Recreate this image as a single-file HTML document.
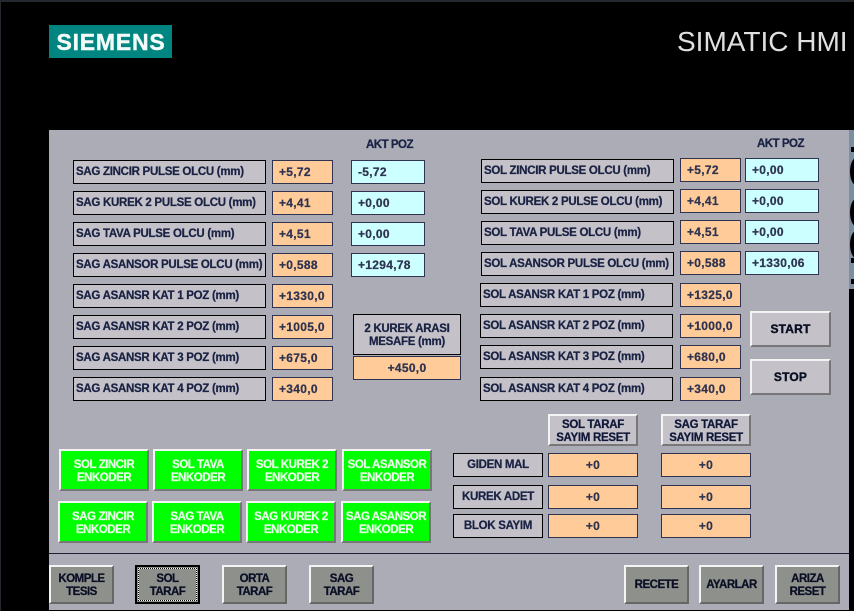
<!DOCTYPE html>
<html><head><meta charset="utf-8"><style>
html,body{margin:0;padding:0;background:#000;width:854px;height:611px;overflow:hidden}
#r{position:relative;width:854px;height:611px;background:#000;overflow:hidden;font:bold 11.5px "Liberation Sans",sans-serif;-webkit-text-stroke:.25px}
#r div{position:absolute;box-sizing:border-box;white-space:nowrap}
.l,.o,.c,.b,.g,.k,.t{display:flex;align-items:center}
.l{background:#c4c2c8;border:1px solid #000;color:#1a2244;height:24px;width:193px;padding-left:2px;letter-spacing:-.28px}
.o{background:#ffcc99;border:1px solid #2f3350;color:#2e3350;height:24px;width:61px;padding-left:6px;letter-spacing:.3px;font-size:12px}
.c{background:#ccffff;border:1px solid #2f3350;color:#2e3350;height:24px;width:74px;padding-left:6px;letter-spacing:.3px;font-size:12px}
.m{justify-content:center;padding-left:0}
.x{text-align:center;justify-content:center;padding:0;line-height:13px;letter-spacing:-.3px}
.b{justify-content:center;text-align:center;line-height:13px;border:2px solid;border-color:#f4f4f4 #777 #777 #f4f4f4;background:#c4c2c8;color:#10183a;letter-spacing:-.3px;padding-top:3px}
.s{font-size:12px;letter-spacing:.2px;color:#0a0f24;-webkit-text-stroke:.4px;padding-top:1px}
.g{justify-content:center;text-align:center;line-height:13px;border:2px solid;border-color:#f4f4f4 #777 #777 #f4f4f4;background:#00ff00;color:#e8ffe8;width:90px;height:42px;letter-spacing:-.45px;padding-top:3px}
.k{justify-content:center;text-align:center;line-height:13px;border:2px solid;border-color:#f4f4f4 #666 #666 #f4f4f4;background:#8e908c;color:#0a0f24;width:65px;height:39px;letter-spacing:-.5px;padding-top:2px}
.t{color:#1a2244;letter-spacing:-.5px}
</style></head><body><div id="r">
<div style="left:0;top:0;width:854px;height:2px;background:#25282e"></div>
<div style="left:0;top:0;width:1px;height:611px;background:#25282e"></div>
<div style="left:49px;top:25px;width:123px;height:33px;padding-left:1px;background:#008580;color:#f2fbfa;font-size:23px;line-height:35px;text-align:center;letter-spacing:.8px;-webkit-text-stroke:.4px">SIEMENS</div>
<div style="left:677px;top:24px;color:#e0e0e0;font:28px/36px 'Liberation Sans',sans-serif;-webkit-text-stroke:0">SIMATIC HMI</div>

<div style="left:849px;top:130px;width:5px;height:159px;background:#7b8fa1"></div>
<div style="left:851px;top:147px;width:3px;height:5px;background:#000"></div>
<div style="left:850px;top:158px;width:12px;height:27px;background:#000;border-radius:50%"></div>
<div style="left:850px;top:199px;width:12px;height:27px;background:#000;border-radius:50%"></div>
<div style="left:850px;top:231px;width:12px;height:27px;background:#000;border-radius:50%"></div>
<div style="left:851px;top:258px;width:3px;height:5px;background:#000"></div>
<div style="left:851px;top:279px;width:3px;height:5px;background:#000"></div>

<div style="left:49px;top:130px;width:800px;height:480px;background:#abacb6"></div>
<div style="left:49px;top:553px;width:800px;height:1px;background:#1c2030"></div>

<div class="t" style="left:366px;top:139px">AKT POZ</div>
<div class="t" style="left:757px;top:138px">AKT POZ</div>

<div class="l" style="left:73px;top:160px">SAG ZINCIR PULSE OLCU (mm)</div>
<div class="l" style="left:73px;top:191px">SAG KUREK 2 PULSE OLCU (mm)</div>
<div class="l" style="left:73px;top:222px">SAG TAVA PULSE OLCU (mm)</div>
<div class="l" style="left:73px;top:253px">SAG ASANSOR PULSE OLCU (mm)</div>
<div class="l" style="left:73px;top:284px">SAG ASANSR KAT 1 POZ (mm)</div>
<div class="l" style="left:73px;top:315px">SAG ASANSR KAT 2 POZ (mm)</div>
<div class="l" style="left:73px;top:346px">SAG ASANSR KAT 3 POZ (mm)</div>
<div class="l" style="left:73px;top:377px">SAG ASANSR KAT 4 POZ (mm)</div>

<div class="o" style="left:272px;top:160px">+5,72</div>
<div class="o" style="left:272px;top:191px">+4,41</div>
<div class="o" style="left:272px;top:222px">+4,51</div>
<div class="o" style="left:272px;top:253px">+0,588</div>
<div class="o" style="left:272px;top:284px">+1330,0</div>
<div class="o" style="left:272px;top:315px">+1005,0</div>
<div class="o" style="left:272px;top:346px">+675,0</div>
<div class="o" style="left:272px;top:377px">+340,0</div>

<div class="c" style="left:351px;top:160px">-5,72</div>
<div class="c" style="left:351px;top:191px">+0,00</div>
<div class="c" style="left:351px;top:222px">+0,00</div>
<div class="c" style="left:351px;top:253px">+1294,78</div>

<div class="l x" style="left:353px;top:314px;width:108px;height:41px;padding-top:2px">2 KUREK ARASI<br>MESAFE (mm)</div>
<div class="o m" style="left:353px;top:356px;width:108px">+450,0</div>

<div class="l" style="left:481px;top:159px">SOL ZINCIR PULSE OLCU (mm)</div>
<div class="l" style="left:481px;top:190px">SOL KUREK 2 PULSE OLCU (mm)</div>
<div class="l" style="left:481px;top:221px">SOL TAVA PULSE OLCU (mm)</div>
<div class="l" style="left:481px;top:252px">SOL ASANSOR PULSE OLCU (mm)</div>
<div class="l" style="left:480px;top:283px">SOL ASANSR KAT 1 POZ (mm)</div>
<div class="l" style="left:480px;top:314px">SOL ASANSR KAT 2 POZ (mm)</div>
<div class="l" style="left:480px;top:345px">SOL ASANSR KAT 3 POZ (mm)</div>
<div class="l" style="left:480px;top:377px">SOL ASANSR KAT 4 POZ (mm)</div>

<div class="o" style="left:680px;top:158px">+5,72</div>
<div class="o" style="left:680px;top:189px">+4,41</div>
<div class="o" style="left:680px;top:220px">+4,51</div>
<div class="o" style="left:680px;top:251px">+0,588</div>
<div class="o" style="left:680px;top:283px">+1325,0</div>
<div class="o" style="left:680px;top:314px">+1000,0</div>
<div class="o" style="left:680px;top:345px">+680,0</div>
<div class="o" style="left:680px;top:377px">+340,0</div>

<div class="c" style="left:745px;top:158px">+0,00</div>
<div class="c" style="left:745px;top:189px">+0,00</div>
<div class="c" style="left:745px;top:220px">+0,00</div>
<div class="c" style="left:745px;top:251px">+1330,06</div>

<div class="b s" style="left:750px;top:311px;width:81px;height:36px">START</div>
<div class="b s" style="left:750px;top:359px;width:81px;height:36px">STOP</div>

<div class="b" style="left:548px;top:414px;width:90px;height:32px">SOL TARAF<br>SAYIM RESET</div>
<div class="b" style="left:661px;top:414px;width:90px;height:32px">SAG TARAF<br>SAYIM RESET</div>

<div class="l x" style="left:453px;top:453px;width:90px">GIDEN MAL</div>
<div class="l x" style="left:453px;top:485px;width:90px">KUREK ADET</div>
<div class="l x" style="left:453px;top:514px;width:90px">BLOK SAYIM</div>
<div class="o m" style="left:548px;top:453px;width:90px">+0</div>
<div class="o m" style="left:548px;top:485px;width:90px">+0</div>
<div class="o m" style="left:548px;top:514px;width:90px">+0</div>
<div class="o m" style="left:661px;top:453px;width:90px">+0</div>
<div class="o m" style="left:661px;top:485px;width:90px">+0</div>
<div class="o m" style="left:661px;top:514px;width:90px">+0</div>

<div class="g" style="left:59px;top:449px">SOL ZINCIR<br>ENKODER</div>
<div class="g" style="left:153px;top:449px">SOL TAVA<br>ENKODER</div>
<div class="g" style="left:247px;top:449px">SOL KUREK 2<br>ENKODER</div>
<div class="g" style="left:342px;top:449px">SOL ASANSOR<br>ENKODER</div>
<div class="g" style="left:58px;top:501px">SAG ZINCIR<br>ENKODER</div>
<div class="g" style="left:152px;top:501px">SAG TAVA<br>ENKODER</div>
<div class="g" style="left:246px;top:501px">SAG KUREK 2<br>ENKODER</div>
<div class="g" style="left:341px;top:501px">SAG ASANSOR<br>ENKODER</div>

<div class="k" style="left:49px;top:565px">KOMPLE<br>TESIS</div>
<div class="k" style="left:135px;top:565px;border:2px solid #000;padding:0;background:#8e908c"><div style="left:1px;top:1px;right:1px;bottom:1px;border:1px dotted #000;background:#fff"><div class="k" style="left:0;top:0;width:100%;height:100%;border:0">SOL<br>TARAF</div></div></div>
<div class="k" style="left:222px;top:565px">ORTA<br>TARAF</div>
<div class="k" style="left:309px;top:565px">SAG<br>TARAF</div>
<div class="k" style="left:624px;top:565px">RECETE</div>
<div class="k" style="left:699px;top:565px">AYARLAR</div>
<div class="k" style="left:775px;top:565px">ARIZA<br>RESET</div>
</div></body></html>
